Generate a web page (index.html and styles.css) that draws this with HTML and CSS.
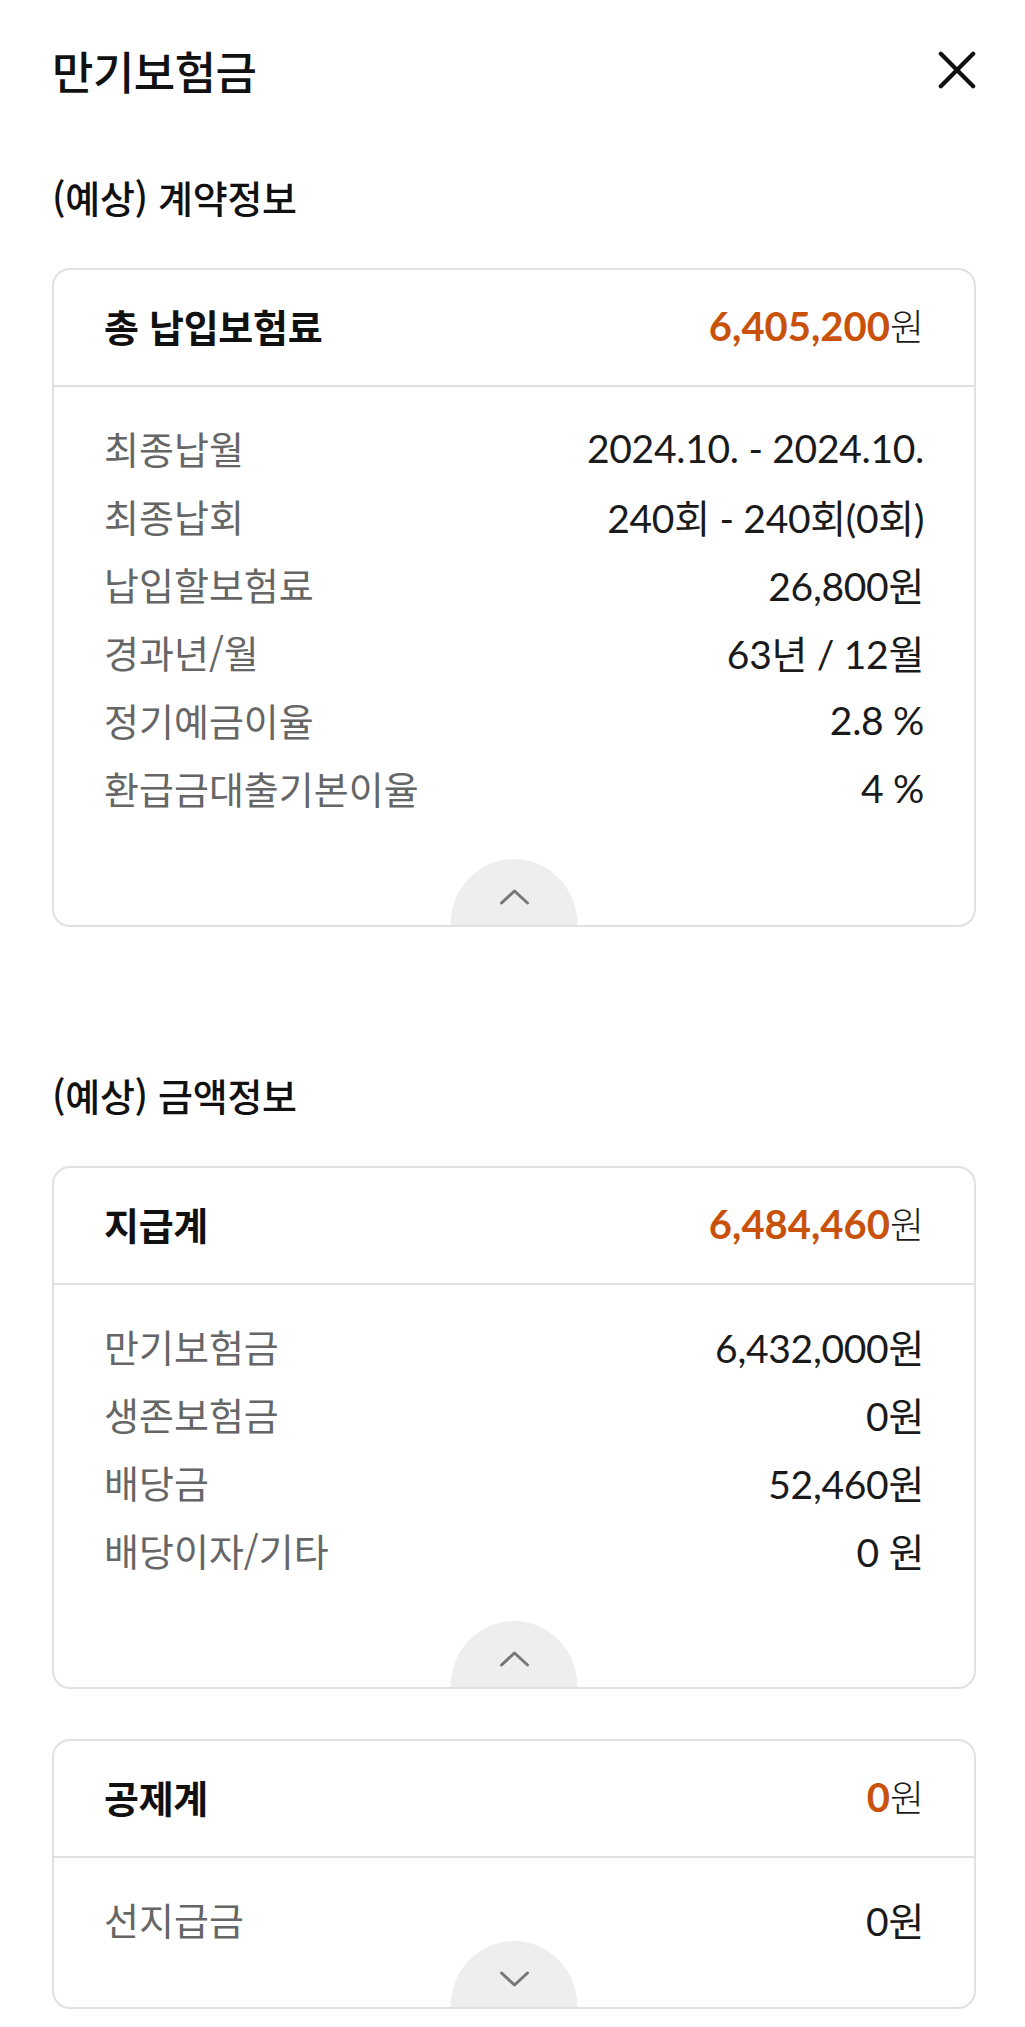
FILE: index.html
```html
<!DOCTYPE html>
<html lang="ko">
<head>
<meta charset="utf-8">
<title>만기보험금</title>
<link rel="stylesheet" href="styles.css">
</head>
<body>
<div class="page">
  <header class="topbar">
    <h1 class="title">만기보험금</h1>
    <button class="close" type="button" aria-label="닫기">
      <svg viewBox="0 0 40 40" width="38" height="38"><path d="M3 3 L37 37 M37 3 L3 37" /></svg>
    </button>
  </header>

  <section class="section">
    <h2 class="section-title">(예상) 계약정보</h2>
    <div class="card">
      <div class="card-head">
        <span class="head-label">총 납입보험료</span>
        <span class="head-value"><b class="accent">6,405,200</b>원</span>
      </div>
      <ul class="card-body">
        <li class="row"><span class="label">최종납월</span><span class="value">2024.10. - 2024.10.</span></li>
        <li class="row"><span class="label">최종납회</span><span class="value">240회 - 240회(0회)</span></li>
        <li class="row"><span class="label">납입할보험료</span><span class="value">26,800원</span></li>
        <li class="row"><span class="label">경과년/월</span><span class="value">63년 / 12월</span></li>
        <li class="row"><span class="label">정기예금이율</span><span class="value">2.8 %</span></li>
        <li class="row"><span class="label">환급금대출기본이율</span><span class="value">4 %</span></li>
      </ul>
      <button class="toggle" type="button" aria-label="접기">
        <svg viewBox="0 0 32 18" width="32" height="18"><path d="M3 15 L16 3 L29 15" /></svg>
      </button>
    </div>
  </section>

  <section class="section section-second">
    <h2 class="section-title">(예상) 금액정보</h2>
    <div class="card">
      <div class="card-head">
        <span class="head-label">지급계</span>
        <span class="head-value"><b class="accent">6,484,460</b>원</span>
      </div>
      <ul class="card-body">
        <li class="row"><span class="label">만기보험금</span><span class="value">6,432,000원</span></li>
        <li class="row"><span class="label">생존보험금</span><span class="value">0원</span></li>
        <li class="row"><span class="label">배당금</span><span class="value">52,460원</span></li>
        <li class="row"><span class="label">배당이자/기타</span><span class="value">0 원</span></li>
      </ul>
      <button class="toggle" type="button" aria-label="접기">
        <svg viewBox="0 0 32 18" width="32" height="18"><path d="M3 15 L16 3 L29 15" /></svg>
      </button>
    </div>

    <div class="card card-collapsed">
      <div class="card-head">
        <span class="head-label">공제계</span>
        <span class="head-value"><b class="accent">0</b>원</span>
      </div>
      <ul class="card-body">
        <li class="row"><span class="label">선지급금</span><span class="value">0원</span></li>
      </ul>
      <button class="toggle" type="button" aria-label="펼치기">
        <svg viewBox="0 0 32 18" width="32" height="18"><path d="M3 3 L16 15 L29 3" /></svg>
      </button>
    </div>
  </section>
</div>
</body>
</html>
```

FILE: styles.css
```css
* { box-sizing: border-box; }

html, body {
  margin: 0;
  padding: 0;
  background: #ffffff;
}

body {
  font-family: "Lato", "Noto Sans CJK KR", "Noto Sans", sans-serif;
  color: #1a1a1a;
}

.page {
  width: 1025px;
  padding: 0 49px 16px 52px;
}

.topbar {
  height: 140px;
  display: flex;
  align-items: center;
  justify-content: space-between;
}

.title {
  margin: 0;
  font-family: "Noto Sans CJK KR", sans-serif;
  font-size: 45px;
  font-weight: 500;
  color: #111;
  letter-spacing: -0.5px;
}

.close {
  width: 44px;
  height: 44px;
  padding: 0;
  border: 0;
  background: none;
  display: flex;
  align-items: center;
  justify-content: flex-end;
}

.close svg path {
  stroke: #111;
  stroke-width: 4.5;
  stroke-linecap: round;
  fill: none;
}

.section-title {
  margin: 32px 0 46px;
  height: 50px;
  line-height: 50px;
  font-family: "Noto Sans CJK KR", sans-serif;
  font-size: 38px;
  font-weight: 500;
  color: #111;
  letter-spacing: -0.3px;
}

.section-second .section-title {
  margin-top: 143px;
}

.card {
  position: relative;
  border: 2px solid #e1e1e1;
  border-radius: 18px;
  overflow: hidden;
  background: #fff;
}

.card + .card {
  margin-top: 50px;
}

.card-head {
  height: 117px;
  padding: 0 50px 5px 50px;
  display: flex;
  align-items: center;
  justify-content: space-between;
  border-bottom: 2px solid #e1e1e1;
}

.head-label {
  font-family: "Noto Sans CJK KR", sans-serif;
  font-size: 38px;
  font-weight: 700;
  color: #111;
  letter-spacing: -0.3px;
}

.head-value {
  font-size: 37px;
  font-weight: 300;
  color: #1a1a1a;
}

.accent {
  font-size: 40px;
  font-weight: 700;
  color: #c8520c;
}

.card-body {
  list-style: none;
  margin: 0;
  padding: 29px 50px 101px 50px;
}

.card-collapsed .card-body {
  padding-bottom: 52px;
}

.row {
  height: 68px;
  padding-bottom: 5px;
  display: flex;
  align-items: center;
  justify-content: space-between;
}

.label {
  font-family: "Noto Sans CJK KR", sans-serif;
  font-size: 38px;
  color: #666;
  letter-spacing: 0;
}

.value {
  font-size: 39px;
  color: #1a1a1a;
  letter-spacing: -0.3px;
}

.toggle {
  position: absolute;
  left: 50%;
  bottom: 0;
  transform: translateX(-50%);
  width: 127px;
  height: 66px;
  padding: 29px 0 0;
  border: 0;
  border-radius: 50% 50% 0 0 / 100% 100% 0 0;
  background: #eeeeee;
  display: flex;
  justify-content: center;
  align-items: flex-start;
}

.toggle svg path {
  stroke: #777;
  stroke-width: 3;
  stroke-linecap: round;
  stroke-linejoin: round;
  fill: none;
}
```
